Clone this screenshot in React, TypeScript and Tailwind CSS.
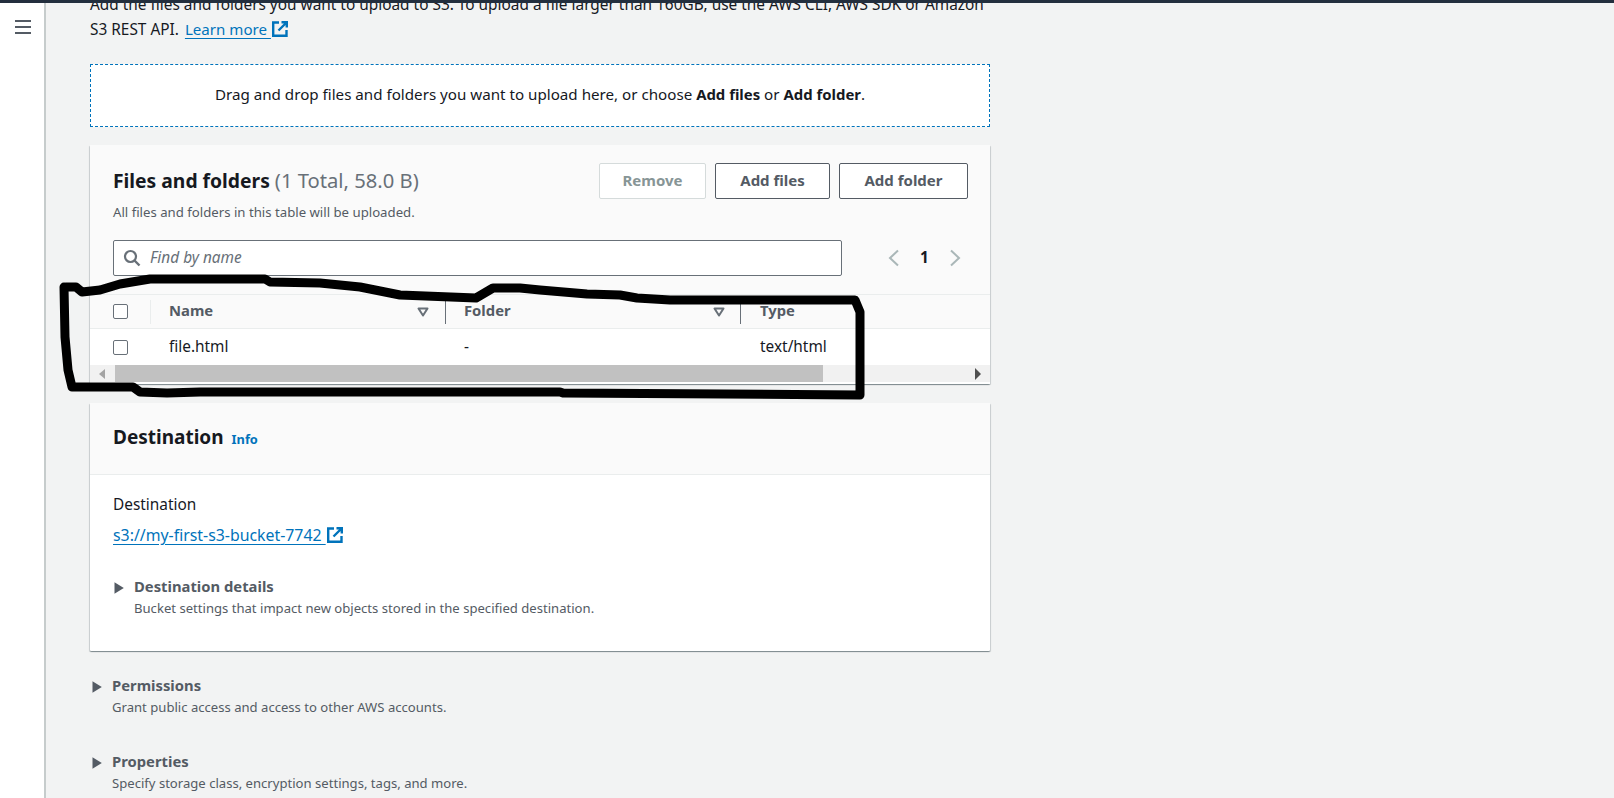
const FONT = "font-['Noto_Sans',sans-serif]";

function ExtIcon() {
  return (
    <svg width="18" height="18" viewBox="0 0 18 18" fill="none" className="inline-block align-[-3px]">
      <path d="M8 2.5H2.2v13.3h13.3V10" stroke="#0073bb" strokeWidth="2.4" />
      <path d="M7.5 10.5 15 3M10.5 2.2h5.3v5.3" stroke="#0073bb" strokeWidth="2.4" />
    </svg>
  );
}

function Caret({ className = "" }: { className?: string }) {
  return (
    <svg width="10" height="12" viewBox="0 0 10 12" className={className}>
      <path d="M0.5 0.2 9.8 6 0.5 11.8Z" fill="#545b64" />
    </svg>
  );
}

function SortIcon() {
  return (
    <svg width="12" height="10" viewBox="0 0 12 10" fill="none">
      <path d="M1.5 1.5h9L6 8.5Z" stroke="#687078" strokeWidth="2" strokeLinejoin="round" />
    </svg>
  );
}

function Checkbox() {
  return <div className="w-[15px] h-[15px] rounded-[2px] border border-[#687078] bg-white" />;
}

function Btn({ label, width, disabled }: { label: string; width: string; disabled?: boolean }) {
  return (
    <button
      className={`${width} h-[36px] pb-[2px] rounded-[2px] border text-[15px] font-bold ${
        disabled ? "border-[#d5dbdb] text-[#879596] bg-white" : "border-[#545b64] text-[#545b64] bg-white"
      }`}
    >
      {label}
    </button>
  );
}

function Expander({ title, sub }: { title: string; sub: string }) {
  return (
    <div className="flex">
      <Caret className="mt-[6px] w-[10px] shrink-0" />
      <div className="ml-[10px]">
        <div className="text-[14.8px] leading-[20px] mb-[2px] font-bold text-[#545b64]">{title}</div>
        <div className="text-[13.1px] leading-[20px] text-[#545b64]">{sub}</div>
      </div>
    </div>
  );
}

export default function App() {
  return (
    <div className={`relative flex h-[798px] w-[1614px] overflow-hidden bg-[#f2f3f3] ${FONT} text-[#16191f]`}>
      <div className="absolute left-0 top-0 h-[3px] w-full bg-[#232f3e] z-10" />

      <aside className="w-[46px] shrink-0 bg-white border-r-2 border-[#c6cccc] pt-[20px] pl-[15px]">
        <div className="flex flex-col gap-[4px] w-[16px]">
          <div className="h-[2px] bg-[#545b64]" />
          <div className="h-[2px] bg-[#545b64]" />
          <div className="h-[2px] bg-[#545b64]" />
        </div>
      </aside>

      <main className="ml-[44px] w-[900px] shrink-0 -mt-[8px]">
        <p className="text-[15.4px] leading-[25px] h-[50px]">
          Add the files and folders you want to upload to S3. To upload a file larger than 160GB, use the AWS CLI, AWS SDK or Amazon S3 REST API.{" "}
          <span className="ml-[2px] text-[15.1px] text-[#0073bb] underline underline-offset-[3px]">Learn more </span>
          <ExtIcon />
        </p>

        <div className="mt-[22px] h-[63px] pb-[2px] border border-dashed border-[#0073bb] bg-white flex items-center justify-center text-[15.17px]">
          <span>
            Drag and drop files and folders you want to upload here, or choose <b className="text-[14.9px]">Add files</b> or{" "}
            <b className="text-[14.9px]">Add folder</b>.
          </span>
        </div>

        <section className="mt-[18px] bg-white rounded-[1px] shadow-[0_1px_1px_0_rgba(0,28,36,0.3),1px_1px_1px_0_rgba(0,28,36,0.15),-1px_1px_1px_0_rgba(0,28,36,0.15)]">
          <div className="bg-[#fafafa] h-[149px] pl-[23px] pr-[22px] pt-[18px]">
            <div className="flex justify-between">
              <h2 className="text-[19.3px] leading-[34px] font-bold">
                Files and folders <span className="text-[20.2px] font-normal text-[#687078]">(1 Total, 58.0 B)</span>
              </h2>
              <div className="flex gap-[9px]">
                <Btn label="Remove" width="w-[107px]" disabled />
                <Btn label="Add files" width="w-[115px]" />
                <Btn label="Add folder" width="w-[129px]" />
              </div>
            </div>
            <p className="text-[13.2px] leading-[20px] text-[#545b64] mt-[3px]">All files and folders in this table will be uploaded.</p>
            <div className="flex items-center mt-[18px]">
              <div className="w-[729px] h-[36px] rounded-[2px] border border-[#687078] bg-white flex items-center pl-[9px] gap-[9px]">
                <svg width="18" height="18" viewBox="0 0 18 18" fill="none">
                  <circle cx="7.5" cy="7.5" r="5.5" stroke="#687078" strokeWidth="2.2" />
                  <path d="M11.5 11.5 16.5 16.5" stroke="#687078" strokeWidth="2.4" />
                </svg>
                <span className="italic text-[15.4px] text-[#687078]">Find by name</span>
              </div>
              <div className="ml-[46px] flex items-center">
                <svg width="12" height="18" viewBox="0 0 12 18" fill="none">
                  <path d="M10 1.5 2 9l8 7.5" stroke="#aab7b8" strokeWidth="2" />
                </svg>
                <span className="ml-[20px] w-[12px] text-[15.4px] font-bold">1</span>
                <svg width="12" height="18" viewBox="0 0 12 18" fill="none" className="ml-[17px]">
                  <path d="M2 1.5 10 9l-8 7.5" stroke="#aab7b8" strokeWidth="2" />
                </svg>
              </div>
            </div>
          </div>

          <div className="grid grid-cols-[61px_295px_295px_1fr] h-[35px] bg-[#fafafa] border-y border-[#eaeded] items-center text-[14.8px] font-bold text-[#545b64]">
            <div className="flex items-center justify-between pl-[23px] h-[24px] border-r border-[#eaeded]">
              <Checkbox />
            </div>
            <div className="flex items-center justify-between pl-[18px] pr-[16px] h-[24px] border-r border-[#687078]">
              <span className="pb-[2px]">Name</span>
              <SortIcon />
            </div>
            <div className="flex items-center justify-between pl-[18px] pr-[15px] h-[24px] border-r border-[#687078]">
              <span className="pb-[2px]">Folder</span>
              <SortIcon />
            </div>
            <div className="pl-[19px] pb-[2px]">Type</div>
          </div>
          <div className="grid grid-cols-[61px_295px_295px_1fr] h-[36px] items-center text-[15.4px] text-[#16191f] bg-white">
            <div className="pl-[23px]">
              <Checkbox />
            </div>
            <div className="pl-[18px]">file.html</div>
            <div className="pl-[18px]">-</div>
            <div className="pl-[19px]">text/html</div>
          </div>
          <div className="h-[17px] bg-[#f1f1f1] flex items-center relative">
            <svg width="8" height="10" viewBox="0 0 8 10" className="absolute left-[8px]">
              <path d="M7 0 1 5l6 5Z" fill="#a3a3a3" />
            </svg>
            <div className="ml-[25px] w-[708px] h-full bg-[#c1c1c1]" />
            <svg width="8" height="12" viewBox="0 0 8 12" className="absolute right-[8px]">
              <path d="M1 0 7 6l-6 6Z" fill="#505050" />
            </svg>
          </div>
          <div className="h-[2px] bg-white" />
        </section>

        <section className="mt-[19px] bg-white rounded-[1px] shadow-[0_1px_1px_0_rgba(0,28,36,0.3),1px_1px_1px_0_rgba(0,28,36,0.15),-1px_1px_1px_0_rgba(0,28,36,0.15)]">
          <div className="h-[72px] bg-[#fafafa] border-b border-[#eaeded] flex items-center px-[23px]">
            <h2 className="text-[19px] font-bold pb-[2px]">Destination</h2>
            <span className="ml-[8px] mt-[2px] text-[12.8px] font-bold text-[#0073bb]">Info</span>
          </div>
          <div className="h-[176px] px-[23px] pt-[19px]">
            <div className="text-[15.4px] leading-[22px]">Destination</div>
            <div className="mt-[8px] text-[15.4px] leading-[22px]">
              <span className="text-[15.85px] text-[#0073bb] underline underline-offset-[3px]">s3://my-first-s3-bucket-7742 </span>
              <ExtIcon />
            </div>
            <div className="mt-[29px] ml-[1px]">
              <Expander title="Destination details" sub="Bucket settings that impact new objects stored in the specified destination." />
            </div>
          </div>
        </section>

        <div className="mt-[24px] ml-[2px] flex flex-col gap-[34px]">
          <Expander title="Permissions" sub="Grant public access and access to other AWS accounts." />
          <Expander title="Properties" sub="Specify storage class, encryption settings, tags, and more." />
        </div>
      </main>

      <svg width="1614" height="798" viewBox="0 0 1614 798" fill="none" className="absolute inset-0 pointer-events-none z-20">
        <path
          d="M66 287 H76 L82 292 L100 290 L120 284 L150 279 L265 279 L270 282 L320 283 L360 287 L400 295 L476 298 L493 288 L520 288 L540 290 L587 294 L620 295 L637 298 L670 300 L855 300 L860 312 L860 395 L563 393 L560 392 L200 392 L167 393 L140 392 L133 387 L72 387 L68 370 L65 337 L64 287"
          stroke="#000"
          strokeWidth="9"
          strokeLinejoin="round"
          strokeLinecap="round"
        />
      </svg>
    </div>
  );
}
